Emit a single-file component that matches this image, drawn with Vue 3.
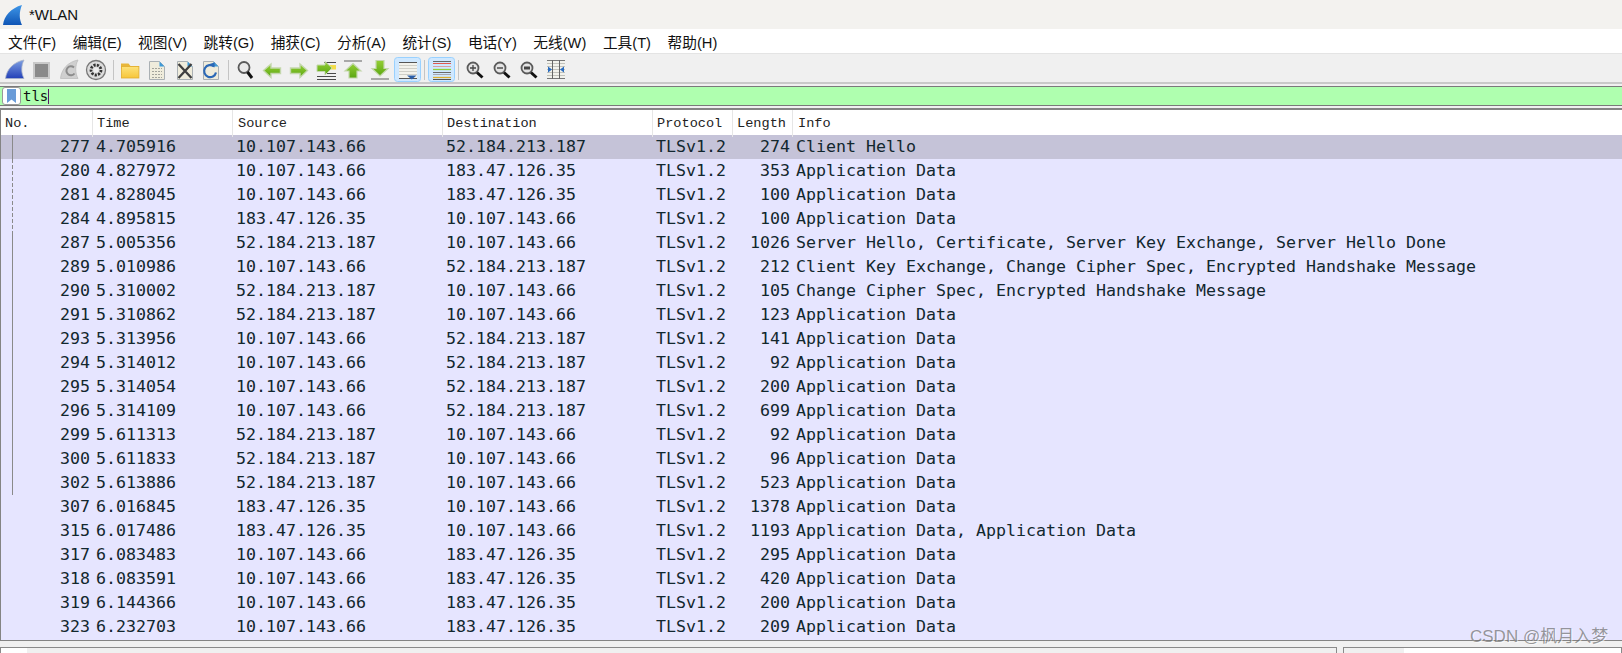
<script setup>
const raw = `277|4.705916|10.107.143.66|52.184.213.187|274|Client Hello
280|4.827972|10.107.143.66|183.47.126.35|353|Application Data
281|4.828045|10.107.143.66|183.47.126.35|100|Application Data
284|4.895815|183.47.126.35|10.107.143.66|100|Application Data
287|5.005356|52.184.213.187|10.107.143.66|1026|Server Hello, Certificate, Server Key Exchange, Server Hello Done
289|5.010986|10.107.143.66|52.184.213.187|212|Client Key Exchange, Change Cipher Spec, Encrypted Handshake Message
290|5.310002|52.184.213.187|10.107.143.66|105|Change Cipher Spec, Encrypted Handshake Message
291|5.310862|52.184.213.187|10.107.143.66|123|Application Data
293|5.313956|10.107.143.66|52.184.213.187|141|Application Data
294|5.314012|10.107.143.66|52.184.213.187|92|Application Data
295|5.314054|10.107.143.66|52.184.213.187|200|Application Data
296|5.314109|10.107.143.66|52.184.213.187|699|Application Data
299|5.611313|52.184.213.187|10.107.143.66|92|Application Data
300|5.611833|52.184.213.187|10.107.143.66|96|Application Data
302|5.613886|52.184.213.187|10.107.143.66|523|Application Data
307|6.016845|183.47.126.35|10.107.143.66|1378|Application Data
315|6.017486|183.47.126.35|10.107.143.66|1193|Application Data, Application Data
317|6.083483|10.107.143.66|183.47.126.35|295|Application Data
318|6.083591|10.107.143.66|183.47.126.35|420|Application Data
319|6.144366|10.107.143.66|183.47.126.35|200|Application Data
323|6.232703|10.107.143.66|183.47.126.35|209|Application Data`
const rows = raw.split('\n').map((l) => {
  const [no, time, src, dst, len, info] = l.split('|')
  return { no, time, src, dst, len, info }
})
const menus = ['文件(F)', '编辑(E)', '视图(V)', '跳转(G)', '捕获(C)', '分析(A)', '统计(S)', '电话(Y)', '无线(W)', '工具(T)', '帮助(H)']
const heads = ['No.', 'Time', 'Source', 'Destination', 'Protocol', 'Length', 'Info']
</script>

<template>
  <div class="win">
    <div class="title">
      <svg class="logo" width="20" height="20" viewBox="0 0 20 20">
        <defs>
          <linearGradient id="lg" x1="0" y1="0" x2="0" y2="1"><stop offset="0" stop-color="#3f97e8"/><stop offset="1" stop-color="#0f55b5"/></linearGradient>
        </defs>
        <path d="M0 20C1 11 8 3 19 0C16 7 16 14 19 20Z" fill="url(#lg)"/>
      </svg>
      <span>*WLAN</span>
    </div>
    <div class="menu">
      <span v-for="m in menus" :key="m" class="mi">{{ m }}</span>
    </div>
    <div class="tools">
      <svg width="600" height="28" viewBox="0 1 600 28">
        <defs>
          <linearGradient id="sh" x1="0" y1="0" x2="0" y2="1"><stop offset="0" stop-color="#7d9fe2"/><stop offset="1" stop-color="#2340b8"/></linearGradient>
          <linearGradient id="ar" x1="0" y1="0" x2="0" y2="1"><stop offset="0" stop-color="#94cf34"/><stop offset="1" stop-color="#5aa612"/></linearGradient>
          <linearGradient id="fo" x1="0" y1="0" x2="0" y2="1"><stop offset="0" stop-color="#fde27a"/><stop offset="1" stop-color="#f7c63a"/></linearGradient>
        </defs>
        <!-- shark -->
        <path d="M5.500 23.500C6.500 14 14 7 24 5C21 10.500 21 18 24 23.500Z" fill="url(#sh)" stroke="#a8b2c8" stroke-width=".8"/>
        <!-- stop -->
        <rect x="34" y="8" width="15" height="15" fill="#8a8a8a" stroke="#c9c9c9" stroke-width="2"/>
        <!-- restart -->
        <path d="M60.500 23.500C61.500 14 68 7 78 5C75 10.500 75 18 78 23.500Z" fill="#cfcfcf" stroke="#bdbdbd" stroke-width=".8"/>
        <path d="M74 12.500a4.500 4.500 0 1 0 0.500 6" fill="none" stroke="#8c8c8c" stroke-width="2"/>
        <!-- options -->
        <circle cx="96" cy="15" r="9.500" fill="#dcdcdc" stroke="#777" stroke-width="1.300"/>
        <circle cx="96" cy="15" r="5" fill="none" stroke="#333" stroke-width="2.800" stroke-dasharray="2.200 1.200"/>
        <circle cx="96" cy="15" r="2.500" fill="#eee"/>
        <path d="M113.500 5V25" stroke="#c4c4c4"/>
        <!-- folder -->
        <path d="M121 10V8.500h7.500l2 2.500h8.500v3h-18Z" fill="#e8b63a"/>
        <rect x="121.400" y="11.500" width="17.500" height="11.500" fill="url(#fo)" stroke="#e2ad2e" stroke-width=".8"/>
        <!-- file -->
        <path d="M149.500 6.500h10l5 5v13h-15Z" fill="#efecdc" stroke="#aab0b4"/>
        <path d="M159.500 6.500l5 5h-5Z" fill="#3f9ad8"/>
        <path d="M152 13.500h10M152 16.500h10M152 19.500h10M152 22.500h10" stroke="#a4a49c" stroke-dasharray="2 1"/>
        <!-- close file -->
        <path d="M177.500 6.500h10l5 5v13h-15Z" fill="#efecdc" stroke="#aab0b4"/>
        <path d="M187.500 6.500l5 5h-5Z" fill="#3f9ad8"/>
        <path d="M178.500 9l13 14M191.500 9l-13 14" stroke="#3f3f3f" stroke-width="2.300"/>
        <!-- reload -->
        <path d="M203.500 6.500h10l5 5v13h-15Z" fill="#efecdc" stroke="#aab0b4"/>
        <path d="M213.500 6.500l5 5h-5Z" fill="#3f9ad8"/>
        <path d="M214 11.500a6 6 0 1 0 2 6" fill="none" stroke="#2b68b6" stroke-width="2.200"/>
        <path d="M209.500 9l5-1.500v5Z" fill="#2b68b6"/>
        <path d="M228.500 5V25" stroke="#c4c4c4"/>
        <!-- find -->
        <circle cx="244" cy="12.500" r="5.500" fill="#eaeaea" stroke="#5a5a5a" stroke-width="1.800"/>
        <path d="M247.500 17l4.500 6" stroke="#111" stroke-width="3"/>
        <!-- back / forward -->
        <path d="M263.500 15.500l7.500-6.500v4h9.500v5.500h-9.500v4Z" fill="url(#ar)" stroke="#c3d7ac" stroke-width="1.400"/>
        <path d="M307.500 15.500l-7.500-6.500v4h-9.500v5.500h9.500v4Z" fill="url(#ar)" stroke="#c3d7ac" stroke-width="1.400"/>
        <!-- go to -->
        <path d="M324 7.500h12M317 24.500h19M317 21.500h19M326 18.500h10" stroke="#4a4a4a" stroke-width="1.200"/>
        <path d="M329 10h7v4.500h-7Z" fill="#f3dd4a"/>
        <path d="M332 13l-7-6.500v3.500h-8v6.500h8v3.500Z" fill="url(#ar)" stroke="#c3d7ac"/>
        <!-- first -->
        <path d="M344 6h18" stroke="#a8a8a8" stroke-width="2"/>
        <path d="M353 8.500l8 7.500h-4v7h-8v-7h-4Z" fill="url(#ar)" stroke="#c3d7ac" stroke-width="1.200"/>
        <!-- last -->
        <path d="M371 24h18" stroke="#a8a8a8" stroke-width="2"/>
        <path d="M380 21l8-7.500h-4v-8h-8v8h-4Z" fill="url(#ar)" stroke="#c3d7ac" stroke-width="1.200"/>
        <!-- autoscroll (active) -->
        <rect x="394.500" y="2.500" width="26" height="24" rx="3" fill="#cfe8ff" stroke="#99d1ff"/>
        <rect x="399" y="7" width="18" height="16.500" fill="#f2f2ec"/>
        <path d="M399 7.500h18M399 23.500h18" stroke="#555"/>
        <path d="M399 10.500h18M399 13.500h18M399 16.500h18M399 19.500h18" stroke="#cfcfc8"/>
        <path d="M407 20.500h9.500l-4.700 4Z" fill="#2a5ea8"/>
        <path d="M424.500 5V25" stroke="#c4c4c4"/>
        <!-- colorize (active) -->
        <rect x="428.500" y="2.500" width="26" height="24" rx="3" fill="#cfe8ff" stroke="#99d1ff"/>
        <path d="M433 6.500h18" stroke="#666"/>
        <path d="M433 8.500h18" stroke="#e0584e"/>
        <path d="M433 11.500h18" stroke="#d9a0a0"/>
        <path d="M433 14.500h18" stroke="#8fcf3a" stroke-width="1.300"/>
        <path d="M433 17.500h18" stroke="#6a6a6a"/>
        <path d="M433 19.500h18" stroke="#a8a8b0"/>
        <path d="M433 22.500h18" stroke="#dcae2e" stroke-width="1.300"/>
        <path d="M433 24.500h18" stroke="#555"/>
        <path d="M458.500 5V25" stroke="#c4c4c4"/>
        <!-- zoom in/out/normal -->
        <circle cx="473" cy="13" r="5.500" fill="#e4e4e4" stroke="#5a5a5a" stroke-width="1.800"/>
        <path d="M477 17.500l5.500 5" stroke="#111" stroke-width="3"/>
        <path d="M470 13h6M473 10v6" stroke="#444" stroke-width="1.300"/>
        <circle cx="500" cy="13" r="5.500" fill="#e4e4e4" stroke="#5a5a5a" stroke-width="1.800"/>
        <path d="M504 17.500l5.500 5" stroke="#111" stroke-width="3"/>
        <path d="M497 13h6" stroke="#444" stroke-width="1.400"/>
        <circle cx="527" cy="13" r="5.500" fill="#e4e4e4" stroke="#5a5a5a" stroke-width="1.800"/>
        <path d="M531 17.500l5.500 5" stroke="#111" stroke-width="3"/>
        <rect x="524" y="11.500" width="6" height="3" fill="#444"/>
        <!-- resize columns -->
        <rect x="547" y="5" width="18" height="19" fill="#f2f2ec"/>
        <path d="M547 8.500h18M547 11.500h18M547 14.500h18M547 17.500h18M547 20.500h18" stroke="#c2c2bc"/>
        <path d="M547 5.500h18M547 23.500h18" stroke="#777"/>
        <path d="M552.500 5v19M559.500 5v19" stroke="#666"/>
        <path d="M548 11.500l4 3-4 3ZM564 11.500l-4 3 4 3Z" fill="#2a6cc0"/>
      </svg>
    </div>
    <div class="filter">
      <div class="bm">
        <svg width="9" height="14" viewBox="0 0 9 14"><path d="M0 0h9v14L4.500 10.500 0 14Z" fill="#6a9cd8"/></svg>
      </div>
      <div class="input"><span>tls</span><i class="caret"></i></div>
    </div>
    <div class="list">
      <div class="grid head">
        <div v-for="h in heads" :key="h" class="hc">{{ h }}</div>
      </div>
      <div class="tree">
        <i class="t1"></i><i class="t2"></i><i class="t3"></i>
      </div>
      <div v-for="(r, i) in rows" :key="r.no" class="grid row" :class="{ sel: i === 0 }">
        <div class="num">{{ r.no }}</div>
        <div>{{ r.time }}</div>
        <div>{{ r.src }}</div>
        <div>{{ r.dst }}</div>
        <div>TLSv1.2</div>
        <div class="num">{{ r.len }}</div>
        <div class="info">{{ r.info }}</div>
      </div>
    </div>
    <div class="status">
      <div class="pane left"><i></i></div>
      <div class="pane right"><i></i></div>
    </div>
    <div class="mark">CSDN @枫月入梦</div>
  </div>
</template>

<style>
html, body { margin: 0; overflow: hidden; background: #f0f0f0; }
</style>

<style scoped>
.win { width: 1622px; height: 653px; position: relative; overflow: hidden; background: #f0f0f0; }
.title { height: 29px; background: #f3f2ef; display: flex; align-items: center; gap: 6px; padding-left: 3px; box-sizing: border-box; font: 15px "Liberation Sans", "Noto Sans CJK SC", sans-serif; color: #111; }
.logo { flex: none; }
.menu { height: 25px; padding-top: 1px; background: #fff; display: flex; align-items: center; padding-left: 8px; color: #111; border-bottom: 1px solid #e4e4e4; box-sizing: border-box; gap: 16.500px; font-size: 14.700px; }
.mi { white-space: nowrap; font-family: "Liberation Sans", "Noto Sans CJK SC", sans-serif; }
.tools { height: 30px; background: #f0f0f0; padding: 2px 0 0 0; box-sizing: border-box; border-bottom: 2px solid #c9c9c9; }
.tools svg { display: block; }
.filter { height: 20px; margin-top: 2px; display: flex; background: #afffaf; border-top: 1px solid #7a7a7a; border-bottom: 1px solid #7a7a7a; box-sizing: border-box; }
.bm { width: 19px; margin-left: 2px; background: #fff; border: 1px solid #999; border-radius: 3px; display: flex; align-items: center; justify-content: center; box-sizing: border-box; }
.input { padding-left: 2px; display: flex; align-items: center; font: 14px/18px "DejaVu Sans Mono", monospace; color: #111; }
.caret { width: 1px; height: 15px; background: #5a1a6a; }
.list { margin-top: 2px; position: relative; height: 533px; box-sizing: border-box; background: #e6e5ff; border: 1px solid #848484; border-top: 2px solid #848484; border-right: none; overflow: hidden; }
.grid { display: grid; grid-template-columns: 91px 140px 210px 210px 80px 60px 1fr; }
.head { height: 25px; background: #fff; font: 13.600px/27px "Liberation Mono", monospace; color: #222; }
.hc { border-left: 1px solid #e6e6e6; padding-left: 4px; white-space: nowrap; }
.hc:first-child { border-left: none; }
.hc:nth-child(3), .hc:nth-child(7) { padding-left: 5px; }
.row { height: 24px; font: 16.620px/24px "DejaVu Sans Mono", monospace; color: #12272e; white-space: nowrap; }
.row > div { padding-left: 4px; }
.row.sel { background: #c5c3d8; }
.row .num { text-align: right; padding-left: 0; padding-right: 2px; }
.row .info { padding-left: 4px; }
.tree { position: absolute; left: 11px; top: 25px; width: 1px; height: 360px; z-index: 1; display: flex; flex-direction: column; }
.t1 { display: block; height: 24px; background: #8a8a8a; flex: none; }
.t2 { display: block; height: 72px; flex: none; background: repeating-linear-gradient(#8a8a8a 0 4px, transparent 4px 6px); }
.t3 { display: block; flex: 1; background: #8a8a8a; }
.status { display: flex; gap: 6px; margin-top: 6px; height: 6px; }
.pane { border: 1px solid #8a8a8a; border-bottom: none; box-sizing: border-box; height: 6px; background: #f0f0f0; }
.pane i { display: block; height: 100%; background: #fff; }
.left { width: 1337px; }
.left i { width: 26px; }
.right { flex: 1; }
.right i { margin-left: 60px; }
.mark { position: absolute; left: 1470px; top: 622px; font: 17px "Liberation Sans", "Noto Sans CJK SC", sans-serif; color: rgba(110, 110, 110, .7); text-shadow: 1px 1px 0 rgba(255, 255, 255, .6); white-space: nowrap; }
</style>
